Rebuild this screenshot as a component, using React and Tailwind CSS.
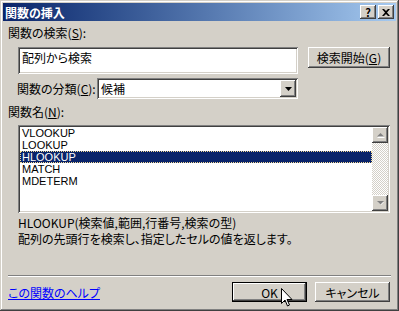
import React from "react";

const raised =
  "shadow-[inset_-1px_-1px_0_#404040,inset_1px_1px_0_#ffffff,inset_-2px_-2px_0_#808080,inset_2px_2px_0_#d4d0c8]";
const sunken =
  "shadow-[inset_1px_1px_0_#808080,inset_-1px_-1px_0_#ffffff,inset_2px_2px_0_#404040,inset_-2px_-2px_0_#d4d0c8]";

const functions = ["VLOOKUP", "LOOKUP", "HLOOKUP", "MATCH", "MDETERM"];

// 無効状態のスクロール矢印
function ScrollArrow({ down }) {
  return (
    <div className={`w-[16px] h-[16px] bg-[#d4d0c8] flex items-center justify-center ${raised}`}>
      <svg width="9" height="6" viewBox="0 0 9 6">
        {down ? (
          <>
            <path d="M2 2h6l-3 3z" fill="#ffffff" />
            <path d="M1 1h7l-3.5 3.5z" fill="#808080" />
          </>
        ) : (
          <>
            <path d="M5 2l4 4H1z" fill="#ffffff" />
            <path d="M4.5 1L8 4.5H1z" fill="#808080" />
          </>
        )}
      </svg>
    </div>
  );
}

export default function App() {
  return (
    <div
      className="relative w-[399px] h-[311px] bg-[#d4d0c8] p-[3px] text-[12px] leading-[13px] text-black shadow-[inset_-1px_-1px_0_#404040,inset_1px_1px_0_#d4d0c8,inset_-2px_-2px_0_#808080,inset_2px_2px_0_#ffffff] [font-feature-settings:'palt']"
      style={{ fontFamily: '"Noto Sans CJK JP", "Liberation Sans", sans-serif' }}
    >
      {/* タイトルバー */}
      <div className="h-[18px] flex items-center justify-between pl-[2px] pr-[2px] bg-gradient-to-r from-[#0a246a] to-[#a6caf0]">
        <span className="text-white font-bold text-[12px]">関数の挿入</span>
        <div className="flex gap-[2px]">
          <div className={`w-[16px] h-[14px] bg-[#d4d0c8] flex items-center justify-center font-bold text-[11px] leading-none ${raised}`}>
            ?
          </div>
          <div className={`w-[16px] h-[14px] bg-[#d4d0c8] flex items-center justify-center ${raised}`}>
            <svg width="8" height="7" viewBox="0 0 8 7">
              <path d="M0 0h2l2 2 2-2h2L5 3.5 8 7H6L4 5 2 7H0l3-3.5z" fill="#000" />
            </svg>
          </div>
        </div>
      </div>

      <div className="px-[5px]">
        <div className="mt-[5px]">
          関数の検索(<span className="underline">S</span>):
        </div>

        <div className="flex mt-[8px]">
          <div className={`ml-[10px] w-[280px] h-[27px] bg-white px-[4px] pt-[4px] ${sunken}`}>
            配列から検索
          </div>
          <div className={`ml-[10px] w-[82px] h-[21px] bg-[#d4d0c8] flex items-center justify-center ${raised}`}>
            検索開始(<span className="underline">G</span>)
          </div>
        </div>

        <div className="flex items-center mt-[4px]">
          <div className="ml-[9px] w-[80px]">
            関数の分類(<span className="underline">C</span>):
          </div>
          <div className={`w-[201px] h-[21px] bg-white flex items-center justify-between pl-[4px] pr-[2px] ${sunken}`}>
            <span>候補</span>
            <div className={`w-[16px] h-[17px] bg-[#d4d0c8] flex items-center justify-center ${raised}`}>
              <svg width="7" height="4" viewBox="0 0 7 4">
                <path d="M0 0h7L3.5 4z" fill="#000" />
              </svg>
            </div>
          </div>
        </div>

        <div className="mt-[6px]">
          関数名(<span className="underline">N</span>):
        </div>

        <div className={`mt-[7px] ml-[10px] w-[372px] h-[88px] bg-white p-[2px] flex ${sunken}`}>
          <div className="flex-1 flex flex-col font-['Liberation_Sans',sans-serif]">
            {functions.map((name) => (
              <div
                key={name}
                className={`h-[12px] text-[11px] leading-[12px] pl-[2px] ${
                  name === "HLOOKUP"
                    ? "bg-[#0a246a] text-white outline-1 outline-dotted outline-[#f5db95] -outline-offset-1"
                    : ""
                }`}
              >
                {name}
              </div>
            ))}
          </div>
          <div className="w-[16px] flex flex-col">
            <ScrollArrow />
            <div className="flex-1 bg-[repeating-conic-gradient(#d4d0c8_0_25%,#ffffff_0_50%)] bg-[length:2px_2px]" />
            <ScrollArrow down />
          </div>
        </div>

        <div className="mt-[2px] ml-[10px] leading-[16px]">
          <div>HLOOKUP(検索値,範囲,行番号,検索の型)</div>
          <div>配列の先頭行を検索し、指定したセルの値を返します。</div>
        </div>

        <div className="mt-[28px] w-[383px] h-[2px] border-t border-t-[#808080] border-b border-b-white" />

        <div className="flex items-center justify-between mt-[5px] pr-[1px]">
          <span className="text-[#0000ff] underline">この関数のヘルプ</span>
          <div className="flex gap-[8px]">
            <div className="w-[75px] h-[20px] border border-black bg-[#d4d0c8] flex items-center justify-center shadow-[inset_-1px_-1px_0_#404040,inset_1px_1px_0_#ffffff,inset_-2px_-2px_0_#808080]">
              OK
            </div>
            <div className={`w-[75px] h-[20px] bg-[#d4d0c8] flex items-center justify-center ${raised}`}>
              キャンセル
            </div>
          </div>
        </div>
      </div>

      {/* マウスカーソル */}
      <svg className="absolute left-[281px] top-[288px]" width="12" height="19" viewBox="0 0 12 19">
        <path
          d="M0.5 0.5v15l3.5-3.5 2.5 6 2-1-2.5-5.5h5z"
          fill="#ffffff"
          stroke="#000000"
          strokeWidth="1"
        />
      </svg>
    </div>
  );
}
